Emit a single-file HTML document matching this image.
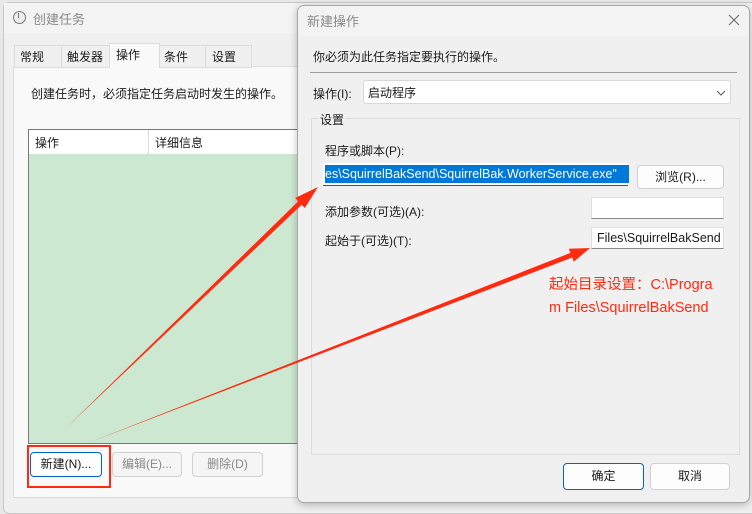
<html><head><style>
body{margin:0;width:752px;height:507px;overflow:hidden;background:#e8e8e8;font-family:"Liberation Sans","Noto Sans CJK SC",sans-serif;font-size:12px;color:#1a1a1a;position:relative}
.a{position:absolute}
.btn{position:absolute;background:#fdfdfd;border:1px solid #d0d0d0;border-radius:4px;text-align:center;box-sizing:border-box}
.box{position:absolute;background:#fff;border:1px solid #e0e0e0;border-bottom:1px solid #8a8a8a;box-sizing:border-box}
</style></head><body>
<div class="a" style="left:3px;top:2px;width:760px;height:510px;background:#f0f0f0;border:1px solid #c8c8c8;border-radius:6px"></div>
<div class="a" style="left:4px;top:3px;width:300px;height:30px;background:#f3f3f3"></div>
<div class="a" style="left:13px;top:11px;width:11px;height:11px;border:1.5px solid #777;border-radius:50%;background:#eee"></div>
<div class="a" style="left:18px;top:13px;width:1px;height:5px;background:#777"></div>
<div class="a" style="left:33px;top:9px;color:#8a8a8a;font-size:13px">创建任务</div>
<div class="a" style="left:13px;top:66px;width:300px;height:430px;background:#f9f9f9;border:1px solid #dcdcdc"></div>
<div class="a" style="left:14px;top:45px;width:46px;height:21px;border:1px solid #dcdcdc;background:#f0f0f0"></div><div class="a" style="left:20px;top:48px">常规</div>
<div class="a" style="left:61px;top:45px;width:47px;height:21px;border:1px solid #dcdcdc;background:#f0f0f0"></div><div class="a" style="left:67px;top:48px">触发器</div>
<div class="a" style="left:109px;top:43px;width:49px;height:24px;border:1px solid #dcdcdc;border-bottom:none;background:#f9f9f9"></div><div class="a" style="left:116px;top:46px">操作</div>
<div class="a" style="left:159px;top:45px;width:45px;height:21px;border:1px solid #dcdcdc;background:#f0f0f0"></div><div class="a" style="left:164px;top:48px">条件</div>
<div class="a" style="left:205px;top:45px;width:45px;height:21px;border:1px solid #dcdcdc;background:#f0f0f0"></div><div class="a" style="left:212px;top:48px">设置</div>
<div class="a" style="left:31px;top:85px">创建任务时，必须指定任务启动时发生的操作。</div>
<div class="a" style="left:28px;top:129px;width:280px;height:313px;background:#cde8d0;border:1px solid #777"></div>
<div class="a" style="left:29px;top:130px;width:280px;height:24px;background:#fff"></div>
<div class="a" style="left:148px;top:130px;width:1px;height:24px;background:#ddd"></div>
<div class="a" style="left:35px;top:134px">操作</div><div class="a" style="left:155px;top:134px">详细信息</div>
<div class="btn" style="left:30px;top:452px;width:72px;height:25px;border-color:#0067c0;line-height:23px">新建(N)...</div>
<div class="btn" style="left:112px;top:452px;width:70px;height:25px;color:#888;background:#f5f5f5;line-height:23px">编辑(E)...</div>
<div class="btn" style="left:192px;top:452px;width:71px;height:25px;color:#888;background:#f5f5f5;line-height:23px">删除(D)</div>
<div class="a" style="left:27px;top:445px;width:80px;height:39px;border:2px solid #ff2a10"></div>

<div class="a" style="left:297px;top:5px;width:451px;height:496px;background:#f0f0f0;border:1px solid #a8a8a8;border-radius:7px;box-shadow:0 2px 8px rgba(0,0,0,.25);overflow:hidden">
<div class="a" style="left:0;top:0;width:451px;height:30px;background:#f3f3f3"></div>
<div class="a" style="left:9px;top:5px;color:#8a8a8a;font-size:13px">新建操作</div>
<svg class="a" style="left:430px;top:8px" width="12" height="12"><path d="M1 1L11 11M11 1L1 11" stroke="#666" stroke-width="1"/></svg>
<div class="a" style="left:15px;top:42px">你必须为此任务指定要执行的操作。</div>
<div class="a" style="left:12px;top:66px;width:427px;height:1px;background:#a0a0a0"></div>
<div class="a" style="left:15px;top:79px">操作(I):</div>
<div class="a" style="left:65px;top:74px;width:368px;height:24px;background:#fff;border:1px solid #d8d8d8;border-radius:3px;box-sizing:border-box"></div>
<div class="a" style="left:70px;top:78px">启动程序</div>
<svg class="a" style="left:418px;top:84px" width="10" height="6"><path d="M1 1L5 5L9 1" stroke="#555" fill="none"/></svg>
<div class="a" style="left:13px;top:112px;width:427px;height:335px;border:1px solid #dcdcdc"></div>
<div class="a" style="left:20px;top:105px;background:#f0f0f0;padding:0 2px">设置</div>
<div class="a" style="left:27px;top:136px">程序或脚本(P):</div>
<div class="a" style="left:25px;top:157px;width:305px;height:22px;background:#fff;border-bottom:1px solid #0067c0"></div>
<div class="a" style="left:27px;top:159px;width:304px;height:18px;background:#0078d7;color:#fff;line-height:18px;white-space:nowrap;font-size:12.5px">es\SquirrelBakSend\SquirrelBak.WorkerService.exe"</div>
<div class="btn" style="left:339px;top:159px;width:87px;height:24px;line-height:22px">浏览(R)...</div>
<div class="a" style="left:27px;top:197px">添加参数(可选)(A):</div>
<div class="box" style="left:293px;top:191px;width:133px;height:22px"></div>
<div class="a" style="left:27px;top:226px">起始于(可选)(T):</div>
<div class="box" style="left:293px;top:221px;width:133px;height:22px;padding:3px 0 0 5px;white-space:nowrap;overflow:hidden;font-size:12.5px">Files\SquirrelBakSend</div>
<div class="btn" style="left:265px;top:457px;width:81px;height:27px;border-color:#0067c0;line-height:25px">确定</div>
<div class="btn" style="left:352px;top:457px;width:80px;height:27px;line-height:25px">取消</div>
</div>
<div class="a" style="left:549px;top:274px;color:#ff2a10;font-size:14.5px;line-height:23px;width:190px">起始目录设置：C:\Progra<br>m Files\SquirrelBakSend</div>
<svg class="a" style="left:0;top:0" width="752" height="507">
<polygon points="67,427 298.3,201.2 295.2,198 318,187 304.8,208 301.7,204.8" fill="#ff2a10"/>
<polygon points="88,443 570.4,252.9 568.8,248.7 590,248 573.8,261.7 572.2,257.5" fill="#ff2a10"/>
</svg>
</body></html>
